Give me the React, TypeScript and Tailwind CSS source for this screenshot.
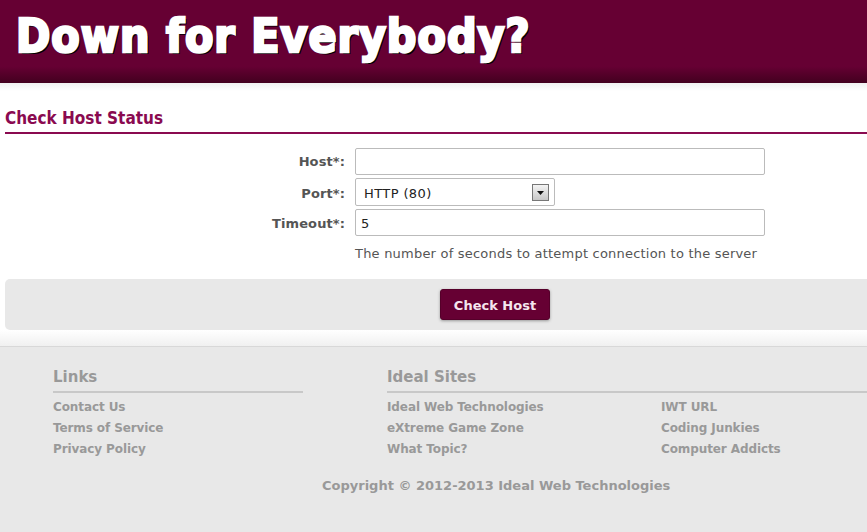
const verdana = '[font-family:"DejaVu_Sans",Verdana,sans-serif]';
const condensed = '[font-family:"DejaVu_Sans_Condensed","DejaVu_Sans",sans-serif]';

const leftLinks = ['Contact Us', 'Terms of Service', 'Privacy Policy'];
const siteLinks = [
  ['Ideal Web Technologies', 'eXtreme Game Zone', 'What Topic?'],
  ['IWT URL', 'Coding Junkies', 'Computer Addicts']
];

function LinkList({ items }: { items: string[] }) {
  return (
    <ul className="flex flex-col">
      {items.map((item) => (
        <li
          key={item}
          className="h-[21px] text-[12px] leading-[21px] font-bold tracking-[-0.1px] text-[#999999]"
        >
          {item}
        </li>
      ))}
    </ul>
  );
}

function Label({ children, className }: { children: string; className?: string }) {
  return (
    <label
      className={`w-[345px] shrink-0 text-right text-[13px] font-bold tracking-[0.1px] text-[#555555] ${className ?? ''}`}
    >
      {children}
    </label>
  );
}

export default function App() {
  return (
    <div className={`h-[532px] w-[867px] overflow-hidden bg-white ${verdana}`}>
      <header className="flex h-[83px] items-start bg-gradient-to-b from-[#660033] from-[80%] to-[#43001f] pl-[16px] pt-[5px]">
        <h1
          className={`${condensed} text-[46px] leading-[62px] font-bold tracking-[1px] whitespace-nowrap text-white [-webkit-text-stroke:2.5px_white] [text-shadow:2px_2px_0_#000]`}
        >
          Down for Everybody?
        </h1>
      </header>
      <div className="h-[8px] bg-gradient-to-b from-[#f0f0f0] to-white" />

      <main className="pl-[5px]">
        <h2
          className={`${condensed} mt-[16px] h-[27px] border-b-2 border-[#8a0a50] text-[17px] leading-[22px] font-bold text-[#8a0a50]`}
        >
          Check Host Status
        </h2>

        <form className="mt-[14px]">
          <div className="flex h-[27px] items-center">
            <div className="-ml-[5px] flex h-full items-center gap-[10px]">
              <Label>Host*:</Label>
              <input className="h-[27px] w-[410px] rounded-[2px] border border-[#bbbbbb] bg-white px-[6px] text-[13px] text-[#222222]" />
            </div>
          </div>
          <div className="mt-[3px] flex h-[28px] items-center">
            <div className="-ml-[5px] flex h-full items-center gap-[10px]">
              <Label className="pt-[3px]">Port*:</Label>
              <div className="relative h-[28px] w-[200px] rounded-[2px] border border-[#bbbbbb] bg-white pt-[2px] pl-[8px] text-[13px] leading-[26px] tracking-[0.4px] text-[#222222]">
                HTTP (80)
                <span className="absolute top-[5px] right-[5px] flex h-[17px] w-[17px] items-center justify-center border border-[#777777] bg-gradient-to-b from-[#f4f4f4] to-[#c8c8c8]">
                  <svg width="7" height="4" viewBox="0 0 7 4">
                    <path d="M0 0h7L3.5 4z" fill="#111111" />
                  </svg>
                </span>
              </div>
            </div>
          </div>
          <div className="mt-[3px] flex h-[27px] items-center">
            <div className="-ml-[5px] flex h-full items-center gap-[10px]">
              <Label className="pt-[3px]">Timeout*:</Label>
              <input
                defaultValue="5"
                className="h-[27px] w-[410px] rounded-[2px] border border-[#bbbbbb] bg-white px-[5px] pt-[2px] text-[13px] text-[#222222]"
              />
            </div>
          </div>
          <p className="mt-[9px] ml-[350px] text-[13px] leading-[18px] tracking-[0.21px] text-[#555555]">
            The number of seconds to attempt connection to the server
          </p>

          <div className="mt-[16px] flex h-[51px] items-center rounded-l-[5px] bg-[#e8e8e8] pl-[435px]">
            <button
              type="button"
              className="h-[31px] w-[110px] rounded-[3px] border border-[#55002a] bg-[#660033] pt-[2px] text-[13px] font-bold text-[#f5e6ee] shadow-[0_1px_3px_rgba(0,0,0,0.35)]"
            >
              Check Host
            </button>
          </div>
        </form>
      </main>

      <div className="h-[16px] bg-gradient-to-b from-white to-[#f0f0f0]" />
      <footer className="h-[186px] border-t border-[#d8d8d8] bg-[#e8e8e8] pl-[53px]">
        <div className="flex pt-[19px]">
          <section className="w-[250px]">
            <h3 className="mb-[4px] h-[27px] border-b-2 border-[#c8c8c8] text-[15px] leading-[22px] font-bold text-[#999999]">
              Links
            </h3>
            <LinkList items={leftLinks} />
          </section>
          <section className="ml-[84px] flex-1">
            <h3 className="mb-[4px] h-[27px] border-b-2 border-[#c8c8c8] text-[15px] leading-[22px] font-bold text-[#999999]">
              Ideal Sites
            </h3>
            <div className="grid grid-cols-[274px_1fr]">
              {siteLinks.map((column) => (
                <LinkList key={column[0]} items={column} />
              ))}
            </div>
          </section>
        </div>
        <p className="mt-[16px] ml-[269px] text-[13px] leading-[20px] font-bold text-[#999999]">
          Copyright © 2012-2013 Ideal Web Technologies
        </p>
      </footer>
    </div>
  );
}
